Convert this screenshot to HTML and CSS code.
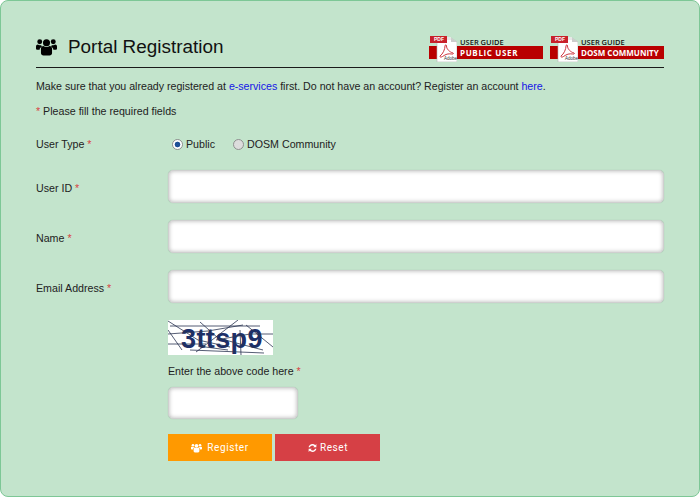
FILE: index.html
```html
<!DOCTYPE html>
<html lang="en">
<head>
<meta charset="utf-8">
<title>Portal Registration</title>
<link rel="stylesheet" href="styles.css">
</head>
<body>
<svg class="defs" width="0" height="0" aria-hidden="true">
  <defs>
    <symbol id="users" viewBox="0 0 22 18">
      <circle cx="11" cy="4.6" r="3.7"/>
      <circle cx="3.9" cy="3.4" r="2.6"/>
      <circle cx="18.1" cy="3.4" r="2.6"/>
      <path d="M5.2 10.6c0-1.600 1.200-2.700 2.600-2.700.9.800 2 1.200 3.200 1.200s2.300-.4 3.200-1.200c1.400 0 2.600 1.100 2.600 2.700v4.600c0 1.600-1.100 2.600-2.600 2.600H7.800c-1.500 0-2.600-1-2.600-2.600z"/>
      <path d="M0 8.400c0-1.200.8-2 2-2 .6.500 1.200.8 2 .8.500 0 1-.1 1.400-.3.100.7.400 1.300.900 1.800-1.500.400-2.500 1.700-2.500 3.300H1.600C.6 12 0 11.400 0 10.500z"/>
      <path d="M22 8.400c0-1.200-.8-2-2-2-.6.500-1.200.8-2 .8-.5 0-1-.1-1.400-.3-.1.7-.4 1.300-.9 1.800 1.500.4 2.500 1.700 2.500 3.300h2.200c1 0 1.600-.6 1.600-1.500z"/>
    </symbol>
    <symbol id="refresh" viewBox="0 0 14 14">
      <path d="M1.500 6C2 3.300 4.300 1.400 7 1.400c1.500 0 2.900.6 3.900 1.600L12.400 1.500V6H7.900l1.600-1.600C8.800 3.800 7.900 3.400 7 3.400c-1.700 0-3.100 1.100-3.500 2.600z"/>
      <path d="M12.500 8C12 10.700 9.700 12.600 7 12.600c-1.500 0-2.900-.6-3.900-1.600L1.600 12.500V8h4.500l-1.600 1.600c.7.600 1.600 1 2.500 1 1.700 0 3.100-1.100 3.500-2.600z"/>
    </symbol>
    <symbol id="pdf" viewBox="0 0 28 26">
      <path d="M8 2h14l6 4v20H8z" fill="#fff" stroke="#b5b5b5" stroke-width=".6"/>
      <path d="M22 2v4h6z" fill="#ccc"/>
      <rect x="1" y="0" width="17" height="7" fill="#c8202a"/>
      <path d="M18 1h4v3h-4z" fill="#e8e8e8"/>
      <path d="M11 20c3-2 5-7 5-10 0-1.500 1.500-1.500 1.500 0 0 3 3 6 6.500 7 1 .5 0 1.500-1 1-4-.5-6 0-9.500 2.500-1.500 1-3 .5-2.500-.5z" fill="none" stroke="#c8202a" stroke-width=".9"/>
    </symbol>
  </defs>
</svg>

<main class="panel">
  <header class="head">
    <h1 class="title">
      <svg class="title-icon"><use href="#users"/></svg>
      Portal Registration
    </h1>
    <div class="guides">
      <a class="guide">
        <span class="guide-top">USER GUIDE</span>
        <span class="guide-bar guide-bar-wide">PUBLIC USER</span>
        <span class="guide-stub"></span>
        <svg class="guide-pdf"><use href="#pdf"/></svg>
        <span class="guide-pdf-label">PDF</span>
        <span class="guide-adobe">Adobe</span>
      </a>
      <a class="guide">
        <span class="guide-top">USER GUIDE</span>
        <span class="guide-bar">DOSM COMMUNITY</span>
        <span class="guide-stub"></span>
        <svg class="guide-pdf"><use href="#pdf"/></svg>
        <span class="guide-pdf-label">PDF</span>
        <span class="guide-adobe">Adobe</span>
      </a>
    </div>
  </header>

  <p class="intro">Make sure that you already registered at <a class="link">e-services</a> first. Do not have an account? Register an account <a class="link">here</a>.</p>
  <p class="req-note"><span class="req">*</span> Please fill the required fields</p>

  <form class="form">
    <div class="row row-radio">
      <label class="label">User Type <span class="req">*</span></label>
      <div class="radios">
        <span class="radio-item"><span class="radio radio-on"></span>Public</span>
        <span class="radio-item"><span class="radio"></span>DOSM Community</span>
      </div>
    </div>
    <div class="row">
      <label class="label label-field">User ID <span class="req">*</span></label>
      <div class="field"></div>
    </div>
    <div class="row">
      <label class="label label-field">Name <span class="req">*</span></label>
      <div class="field"></div>
    </div>
    <div class="row">
      <label class="label label-field">Email Address <span class="req">*</span></label>
      <div class="field"></div>
    </div>
    <div class="captcha-block">
      <svg class="captcha" viewBox="0 0 105 35">
        <rect width="105" height="35" fill="#fff"/>
        <text x="13" y="28" class="captcha-text">3ttsp9</text>
        <g class="captcha-lines">
          <path d="M0 1 L30 20 L62 27"/>
          <path d="M2 6 H92"/>
          <path d="M0 14 L40 11 L75 5"/>
          <path d="M0 24 H38"/>
          <path d="M0 10 L14 30"/>
          <path d="M32 2 L50 18 L72 24 L95 30"/>
          <path d="M70 0 L44 20 L28 32"/>
          <path d="M78 5 L105 27"/>
          <path d="M22 30 L96 33"/>
          <path d="M48 20 L82 14 L105 14"/>
          <path d="M72 10 L73 35"/>
          <path d="M30 26 L60 30"/>
        </g>
      </svg>
      <p class="captcha-label">Enter the above code here <span class="req">*</span></p>
      <div class="field field-small"></div>
      <div class="buttons">
        <span class="btn btn-register"><svg class="btn-icon"><use href="#users"/></svg>Register</span>
        <span class="btn btn-reset"><svg class="btn-icon btn-icon-r"><use href="#refresh"/></svg>Reset</span>
      </div>
    </div>
  </form>
</main>
</body>
</html>
```

FILE: styles.css
```css
* { box-sizing: border-box; }
html, body { margin: 0; padding: 0; background: #fff; }
body {
  width: 700px;
  height: 497px;
  overflow: hidden;
  font-family: "Liberation Sans", Arial, sans-serif;
  font-size: 10.67px;
  color: #222;
}
.defs { position: absolute; }
.panel {
  width: 700px;
  height: 497px;
  background: #c3e4cc;
  border: 1px solid #7dc796;
  border-radius: 8px;
  padding: 35px 35px 0;
}
.head {
  display: flex;
  justify-content: space-between;
  align-items: flex-end;
  height: 32px;
  border-bottom: 1px solid #1a1a1a;
  padding-bottom: 5px;
}
.title {
  display: flex;
  align-items: center;
  margin: 0 0 4px;
  font-size: 18.9px;
  font-weight: 400;
  color: #111;
  line-height: 22px;
}
.title-icon { width: 21px; height: 18px; margin-right: 11px; fill: #000; }
.guides { display: flex; gap: 7px; }
.guide {
  position: relative;
  display: block;
  width: 114px;
  height: 26px;
  padding-left: 28px;
  color: #111;
}
.guide-top {
  display: block;
  height: 10px;
  padding-left: 3px;
  font-family: "Open Sans", sans-serif;
  font-size: 7.5px;
  font-weight: 600;
  line-height: 13px;
}
.guide-bar {
  display: block;
  height: 13px;
  padding-left: 3px;
  background: #b90000;
  color: #fff;
  font-family: "Open Sans", sans-serif;
  font-size: 8px;
  font-weight: 700;
  line-height: 13px;
  white-space: nowrap;
}
.guide-bar-wide { letter-spacing: .65px; }
.guide-stub {
  position: absolute;
  left: 0;
  top: 10px;
  width: 8px;
  height: 13px;
  background: #b90000;
}
.guide-pdf {
  position: absolute;
  left: 0;
  top: 0;
  width: 28px;
  height: 26px;
}
.guide-pdf-label {
  position: absolute;
  left: 5px;
  top: 0;
  font-size: 5px;
  line-height: 7px;
  color: #fff;
  font-weight: 700;
}
.guide-adobe {
  position: absolute;
  left: 15px;
  top: 20px;
  font-size: 4.5px;
  line-height: 6px;
  color: #333;
}
.intro { margin: 11px 0 0; line-height: 14px; letter-spacing: -.02px; }
.req-note { margin: 11px 0 0; line-height: 14px; }
.link { color: #1515e6; }
.req { color: #d9423f; }
.row {
  display: flex;
  align-items: center;
  height: 33px;
  margin-bottom: 17px;
}
.row-radio { height: 20px; margin: 16px 0; }
.label { width: 132px; flex: none; }
.label-field { padding-top: 2px; }
.radios { display: flex; gap: 18px; padding-left: 4px; }
.radio-item { display: flex; align-items: center; }
.radio {
  width: 11px;
  height: 11px;
  margin-right: 3px;
  border-radius: 50%;
  border: 1px solid #8f8f8f;
  background: #dcdcdc;
}
.radio-on {
  background: radial-gradient(circle, #1d4f96 0 2.5px, #fff 3.2px);
}
.field {
  flex: 1;
  height: 33px;
  background: #fff;
  border: 1px solid #cfcfcf;
  border-radius: 5px;
  box-shadow: inset 0 0 4px rgba(0, 0, 0, .3), 0 0 1px rgba(0, 0, 0, .2);
}
.captcha-block { margin-left: 132px; }
.captcha { display: block; width: 105px; height: 35px; }
.captcha-text {
  font-family: "Liberation Sans", sans-serif;
  font-size: 27px;
  font-weight: 700;
  fill: #1c2f68;
  letter-spacing: .4px;
}
.captcha-lines { fill: none; stroke: #2a3350; stroke-width: .8; }
.captcha-label { margin: 9px 0 0; line-height: 14px; }
.field-small { width: 130px; height: 32px; margin-top: 9px; }
.buttons { display: flex; gap: 3px; margin-top: 15px; }
.btn {
  display: flex;
  align-items: center;
  justify-content: center;
  width: 105px;
  height: 27px;
  color: #fff;
  font-family: Roboto, sans-serif;
  font-size: 10px;
  letter-spacing: .6px;
}
.btn-register { width: 104px; background: #ff9900; }
.btn-reset { background: #d64045; }
.btn-icon { width: 11px; height: 10px; margin-right: 5px; fill: #fff; }
.btn-icon-r { margin-right: 2px; }
```
